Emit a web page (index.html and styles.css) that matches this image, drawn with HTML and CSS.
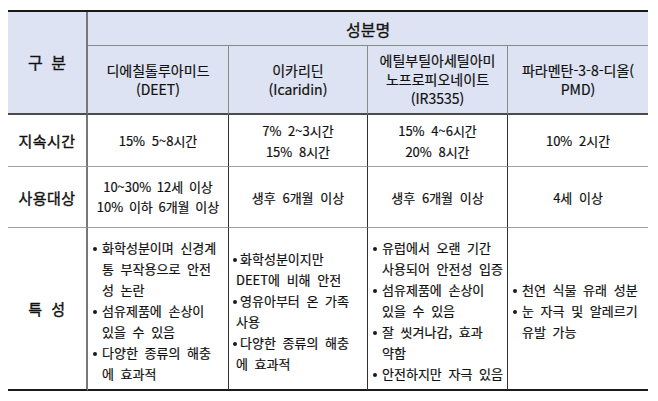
FILE: index.html
```html
<!DOCTYPE html>
<html lang="ko">
<head>
<meta charset="utf-8">
<title>성분별 비교</title>
<link rel="stylesheet" href="styles.css">
</head>
<body>
<div class="page">
<table class="spec">
  <colgroup>
    <col class="c-label"><col class="c-1"><col class="c-2"><col class="c-3"><col class="c-4">
  </colgroup>
  <thead>
    <tr class="r-top">
      <th class="head-label" rowspan="2">구 분</th>
      <th class="head-group" colspan="4">성분명</th>
    </tr>
    <tr class="r-names">
      <th class="head-name">디에칠톨루아미드<br>(DEET)</th>
      <th class="head-name">이카리딘<br>(Icaridin)</th>
      <th class="head-name">에틸부틸아세틸아미<br>노프로피오네이트<br>(IR3535)</th>
      <th class="head-name last">파라멘탄-3-8-디올(<br>PMD)</th>
    </tr>
  </thead>
  <tbody>
    <tr class="r-time">
      <th class="row-label">지속시간</th>
      <td>15% 5~8시간</td>
      <td>7% 2~3시간<br>15% 8시간</td>
      <td>15% 4~6시간<br>20% 8시간</td>
      <td class="last">10% 2시간</td>
    </tr>
    <tr class="r-target">
      <th class="row-label">사용대상</th>
      <td class="narrow">10~30% 12세 이상<br>10% 이하 6개월 이상</td>
      <td>생후 6개월 이상</td>
      <td>생후 6개월 이상</td>
      <td class="last">4세 이상</td>
    </tr>
    <tr class="r-feature">
      <th class="row-label">특 성</th>
      <td class="feat">
        <ul class="bullets">
          <li>화학성분이며 신경계<br>통 부작용으로 안전<br>성 논란</li>
          <li>섬유제품에 손상이<br>있을 수 있음</li>
          <li>다양한 종류의 해충<br>에 효과적</li>
        </ul>
      </td>
      <td class="feat tight">
        <ul class="bullets bullets--tight">
          <li>화학성분이지만<br>DEET에 비해 안전</li>
          <li>영유아부터 온 가족<br>사용</li>
          <li>다양한 종류의 해충<br>에 효과적</li>
        </ul>
      </td>
      <td class="feat">
        <ul class="bullets">
          <li>유럽에서 오랜 기간<br>사용되어 안전성 입증</li>
          <li>섬유제품에 손상이<br>있을 수 있음</li>
          <li>잘 씻겨나감, 효과<br>약함</li>
          <li>안전하지만 자극 있음</li>
        </ul>
      </td>
      <td class="feat last">
        <ul class="bullets">
          <li>천연 식물 유래 성분</li>
          <li>눈 자극 및 알레르기<br>유발 가능</li>
        </ul>
      </td>
    </tr>
  </tbody>
</table>
</div>
</body>
</html>
```
FILE: styles.css
```css
* { box-sizing: border-box; }

body {
  margin: 0;
  background: #ffffff;
  color: #111111;
  font-family: "Noto Sans CJK KR", "Noto Sans", sans-serif;
}

.page {
  padding: 10px 10px 0 8px;
}

.spec {
  width: 640px;
  table-layout: fixed;
  border-collapse: separate;
  border-spacing: 0;
  border-top: 2px solid #1a1a1a;
}

.c-label { width: 80px; }
.c-1 { width: 141px; }
.c-2 { width: 139px; }
.c-3 { width: 140px; }
.c-4 { width: 140px; }

.spec th,
.spec td {
  padding: 0 2px;
  text-align: center;
  vertical-align: middle;
  font-weight: normal;
  white-space: nowrap;
  -webkit-text-stroke: 0.2px #111;
}

/* header */
.spec thead th {
  background: #dde3f2;
}

.r-top { height: 34px; }
.r-names { height: 69px; }
.r-time { height: 52px; }
.r-target { height: 61px; }
.r-feature { height: 163px; }

.head-label {
  font-size: 16px;
  word-spacing: 4px;
  border-right: 2px solid #777;
  border-bottom: 2px solid #4a4a4a;
  padding-bottom: 2px !important;
  -webkit-text-stroke: 0.35px #111 !important;
}

.head-group {
  font-size: 16px;
  border-bottom: 1px solid #8a8a8a;
  -webkit-text-stroke: 0.35px #111 !important;
}

.head-name {
  font-size: 14px;
  line-height: 19px;
  border-right: 1px solid #8a8a8a;
  border-bottom: 2px solid #4a4a4a;
}

/* body */
.row-label {
  font-size: 15px;
  letter-spacing: 0.5px;
  word-spacing: 4px;
  border-right: 2px solid #777;
  -webkit-text-stroke: 0.4px #111 !important;
}

.spec tbody td {
  font-size: 13px;
  line-height: 21px;
  word-spacing: 3px;
  border-right: 1px solid #333;
}

.spec tbody tr:not(.r-feature) th,
.spec tbody tr:not(.r-feature) td {
  border-bottom: 1px solid #a0a0a0;
}

.r-time td { line-height: 22px; }
.r-target td.narrow { line-height: 20px; word-spacing: 2px; }

.r-feature th,
.r-feature td {
  border-bottom: 2px solid #1a1a1a;
}

.spec .last { border-right: none; }

.feat {
  text-align: left !important;
  padding: 4px 1px 0 4px !important;
}

.feat.tight { padding-left: 3px !important; }

.bullets {
  list-style: none;
  margin: 0;
  padding: 0;
  font-size: 13px;
  line-height: 21px;
}

.bullets li {
  padding-left: 10px;
  text-indent: -10px;
}

.bullets li::before {
  content: "";
  display: inline-block;
  width: 4px;
  height: 4px;
  margin: 0 5px 0 1px;
  border-radius: 50%;
  background: #1a1a1a;
  vertical-align: middle;
  text-indent: 0;
}

.bullets--tight li {
  padding-left: 4px;
  text-indent: -4px;
}

.bullets--tight li::before {
  margin-right: 3px;
}
```
